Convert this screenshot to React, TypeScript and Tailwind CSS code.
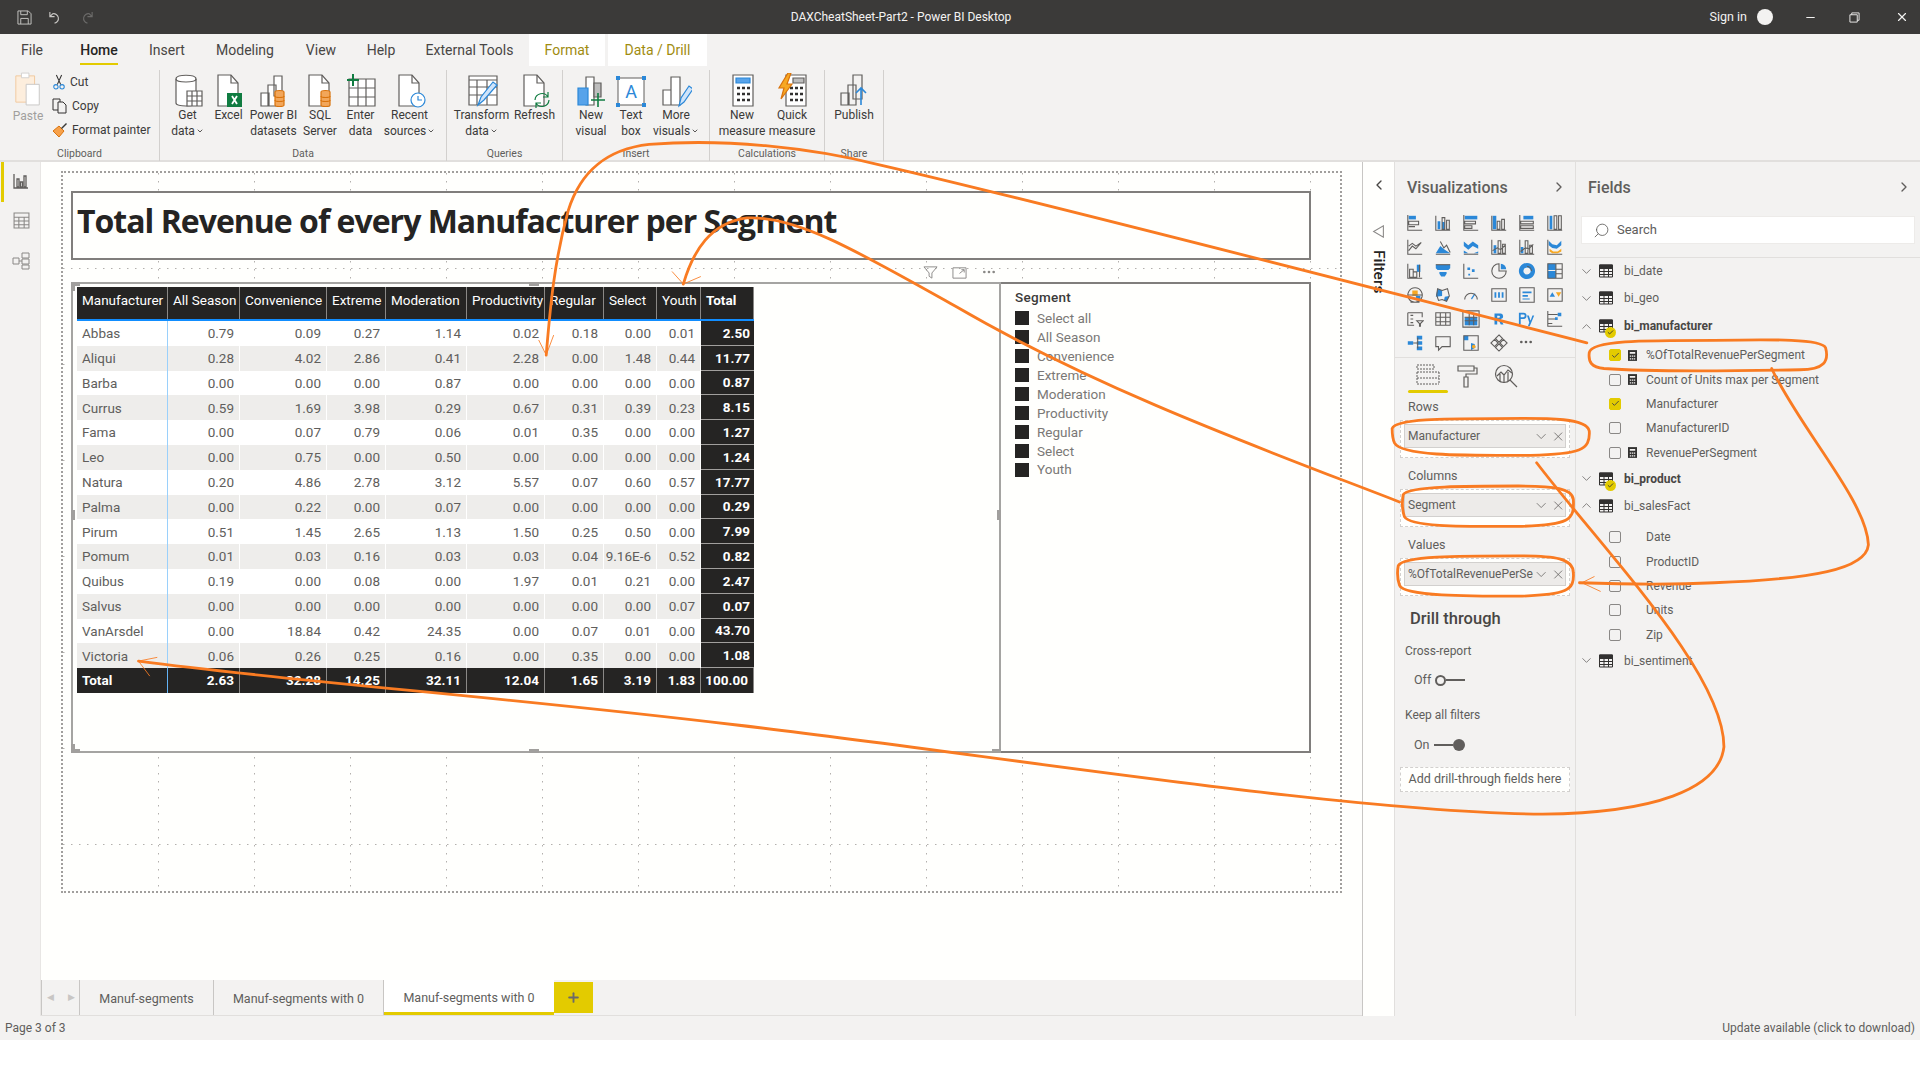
import type { ReactNode } from 'react';
import { Check, ChevronDown, ChevronLeft, ChevronRight, ChevronUp, Ellipsis, Minus, Plus, Search, X } from 'lucide-react';

const SEGMENT_COLUMNS = ['Manufacturer', 'All Season', 'Convenience', 'Extreme', 'Moderation', 'Productivity', 'Regular', 'Select', 'Youth', 'Total'];

const ROWS = [
  ['Abbas', '0.79', '0.09', '0.27', '1.14', '0.02', '0.18', '0.00', '0.01', '2.50'],
  ['Aliqui', '0.28', '4.02', '2.86', '0.41', '2.28', '0.00', '1.48', '0.44', '11.77'],
  ['Barba', '0.00', '0.00', '0.00', '0.87', '0.00', '0.00', '0.00', '0.00', '0.87'],
  ['Currus', '0.59', '1.69', '3.98', '0.29', '0.67', '0.31', '0.39', '0.23', '8.15'],
  ['Fama', '0.00', '0.07', '0.79', '0.06', '0.01', '0.35', '0.00', '0.00', '1.27'],
  ['Leo', '0.00', '0.75', '0.00', '0.50', '0.00', '0.00', '0.00', '0.00', '1.24'],
  ['Natura', '0.20', '4.86', '2.78', '3.12', '5.57', '0.07', '0.60', '0.57', '17.77'],
  ['Palma', '0.00', '0.22', '0.00', '0.07', '0.00', '0.00', '0.00', '0.00', '0.29'],
  ['Pirum', '0.51', '1.45', '2.65', '1.13', '1.50', '0.25', '0.50', '0.00', '7.99'],
  ['Pomum', '0.01', '0.03', '0.16', '0.03', '0.03', '0.04', '9.16E-6', '0.52', '0.82'],
  ['Quibus', '0.19', '0.00', '0.08', '0.00', '1.97', '0.01', '0.21', '0.00', '2.47'],
  ['Salvus', '0.00', '0.00', '0.00', '0.00', '0.00', '0.00', '0.00', '0.07', '0.07'],
  ['VanArsdel', '0.00', '18.84', '0.42', '24.35', '0.00', '0.07', '0.01', '0.00', '43.70'],
  ['Victoria', '0.06', '0.26', '0.25', '0.16', '0.00', '0.35', '0.00', '0.00', '1.08'],
];
const TOTALS = ['Total', '2.63', '32.28', '14.25', '32.11', '12.04', '1.65', '3.19', '1.83', '100.00'];
const SLICER_ITEMS = ['Select all', 'All Season', 'Convenience', 'Extreme', 'Moderation', 'Productivity', 'Regular', 'Select', 'Youth'];

const GRID = 'grid grid-cols-[91px_72px_87px_59px_81px_78px_59px_53px_44px_53px]';

// g = grey outline, b = blue fill, all on a 20x20 box
const VIZ_ICONS: { g: string; b?: string; y?: string }[] = [
  { g: 'M2 1v17h16M3 8h11v4H3zM3 14h7', b: 'M3 2h8v4H3z' },
  { g: 'M2 2v16h16M9 4h3v13H9zM14 7h3v10h-3z', b: 'M4 8h3v9H4zM9 9h3v8H9z' },
  { g: 'M2 1v17h16M3 8h12v3H3zM3 13h8v3H3z', b: 'M3 2h14v4H3z' },
  { g: 'M2 2v16h16M8 8h3v9H8zM13 6h3v11h-3z', b: 'M3 2h4v15H3z' },
  { g: 'M2 1v17h16M3 8h14v3H3zM3 13h14v3H3z', b: 'M6 2h11v4H6z' },
  { g: 'M2 2v16h16M9 2h3v15H9zM14 2h3v15h-3z', b: 'M4 2h3v15H4z' },
  { g: 'M2 2v16h16M3 14l4-5 4 3 6-7M3 9l4-3 4 3 6-4' },
  { g: 'M2 18h16M7 4l4 7 3-3 4 8', b: 'M2 17l5-8 5 4 6 4z' },
  { g: 'M2 18h16', b: 'M2 4l5 4 5-4 6 4v4l-6-3-5 4-5-4zM2 14l5 3h6l5-2v2H2z' },
  { g: 'M2 2v16h16M9 3h3v14H9zM14 7h3v10h-3zM3 14l5-3 4 2 5-5', b: 'M4 8h3v9H4z' },
  { g: 'M2 2v16h16M8 3h3v14H8zM13 8h3v9h-3zM3 15l5-4 4 1 5-5', b: 'M3 10h3v7H3z' },
  { g: 'M2 2v16h16', b: 'M3 3l4 4 5 1 5-5v5l-5 4-5-1-4-3z', y: 'M4 12l4 3 5 0 4-3v3l-4 2H7l-3-2z' },
  { g: 'M2 2v16h16M4 8h4v9H4zM8 11h4v6H8zM15 3v14', b: 'M12 3h4v8h-4z' },
  { b: 'M2 3h16v4l-2 2H4L2 7zM6 11h8v2l-2 3H8l-2-3z', g: 'M2 3h16' },
  { g: 'M2 2v16h16', b: 'M6 6h3v3H6zM11 8h3v3h-3zM7 13h2v2H7z' },
  { g: 'M10 2a8 8 0 1 0 8 8h-8z', b: 'M12 2a6 6 0 0 1 6 6h-6z' },
  { g: 'M10 5a5 5 0 0 1 5 5', b: 'M10 1a9 9 0 1 1-.1 0zM10 6a4 4 0 1 0 .1 0z' },
  { g: 'M2 2h16v16H2zM11 2v16M11 8h7M11 13h7', b: 'M2 2h9v7H2zM2 10h9v8H2z' },
  { g: 'M10 2a8 8 0 1 0 .1 0zM5 18h10M2 10h16', y: 'M7 5h6v6H7z', b: 'M11 11h5v5h-5z' },
  { g: 'M4 3l5 2 6-2 2 8-3 6-5-2-4 1-2-6z', b: 'M4 3l5 2v6l-7 1zM12 12l5-1-3 6-3-1z' },
  { g: 'M3 15a7 7 0 0 1 14 0', b: 'M10 14l4-6 1 1-4 6z' },
  { g: 'M2 3h16v14H2z', b: 'M5 7h2v6H5zM9 7h2v6H9zM13 7h2v6h-2z' },
  { g: 'M2 2h16v16H2z', b: 'M5 6h10v2H5zM5 10h6v2H5zM5 14h8v1H5z' },
  { g: 'M2 3h16v14H2z', b: 'M4 12l3-5 3 5z', y: 'M11 7h6l-3 5z' },
  { g: 'M2 3h16v5M2 3v14h7M12 12h7l-3 3v3h-1v-3zM5 6h3M5 10h3M5 14h3' },
  { g: 'M2 3h16v14H2zM2 8h16M2 13h16M7 3v14M13 3v14' },
  { g: 'M1 1h18v18H1zM3 8h14M3 12h14M8 4v13M13 4v13', b: 'M3 8h14v9H3z' },
  { b: 'M5 4h6a3 3 0 0 1 1 6l3 6h-3l-3-6H8v6H5zM8 6.500v2h2a1 1 0 0 0 0-2z', g: '' },
  { b: 'M1 3h5a3 3 0 0 1 0 7H3v6H1zM3 5v3h3a1.500 1.500 0 0 0 0-3zM10 6h2l2 6 2-6h2l-5 12h-2l1.500-4z', g: '' },
  { g: 'M2 1v17h16M2 5h11M2 10h8M2 15h5', b: 'M13 3h4v4h-4zM10 8h3v3h-3z' },
  { g: 'M8 10h5M13 4v12', b: 'M2 8h6v4H2zM12 2h6v4h-6zM12 8h6v4h-6zM12 14h6v4h-6z' },
  { g: 'M2 3h16v11H9l-4 4v-4H2z' },
  { g: 'M2 2h16v16H2z', b: 'M2 2h5v5H2zM10 10l4 1 1 4-5 3z', y: 'M13 12a2 2 0 1 0 .1 0z' },
  { g: 'M10 1l4 4-4 4-4-4zM15 6l4 4-4 4-4-4zM5 6l4 4-4 4-4-4zM10 11l4 4-4 4-4-4z' },
];

const Page = ({ children }: { children: ReactNode }) => (
  <svg viewBox="0 0 32 36" className="w-[32px] h-[36px]" fill="none" stroke="#605e5c" strokeWidth="1.2">{children}</svg>
);

const DocIcon = ({ children }: { children?: ReactNode }) => (
  <Page>
    <path d="M5 2h13l7 8v23H5z" fill="#fff" />
    <path d="M18 2v8h7" />
    {children}
  </Page>
);

const Cyl = () => (
  <>
    <path d="M17 19c0-2 9-2 9 0v13c0 2-9 2-9 0z" fill="#f2a65a" stroke="#d9730d" />
    <path d="M17 23c0 2 9 2 9 0M17 27c0 2 9 2 9 0" stroke="#d9730d" />
  </>
);

const RIBBON_ICONS: Record<string, ReactNode> = {
  getData: (
    <Page>
      <path d="M4 6c0-5 20-5 20 0v24c0 4-20 4-20 0z" fill="#fff" />
      <path d="M4 6c0 4 20 4 20 0" />
      <path d="M15 18h15v15H15zM15 23h15M15 28h15M20 18v15M25 18v15" fill="#fff" />
    </Page>
  ),
  excel: (
    <DocIcon>
      <path d="M14 20h15v14H14z" fill="#107c41" stroke="none" />
      <path d="M19 23l5 8M24 23l-5 8" stroke="#fff" strokeWidth="1.8" />
    </DocIcon>
  ),
  datasets: (
    <Page>
      <path d="M3 20h8v13H3zM10 12h8v21h-8zM16 3h8v20h-8z" fill="#fff" />
      <Cyl />
    </Page>
  ),
  sql: (
    <DocIcon>
      <Cyl />
    </DocIcon>
  ),
  enter: (
    <Page>
      <path d="M4 6h26v27H4zM4 15h26M4 24h26M13 6v27M21 6v27" fill="#fff" />
      <path d="M8 1v12M2 7h12" stroke="#107c41" strokeWidth="2" />
    </Page>
  ),
  recent: (
    <DocIcon>
      <circle cx="24" cy="27" r="7" fill="#fff" stroke="#2b88d8" />
      <path d="M24 23v4h4" stroke="#2b88d8" />
    </DocIcon>
  ),
  transform: (
    <Page>
      <path d="M3 3h28v29H3z" fill="#fff" />
      <path d="M3 7h28M3 14h28M3 22h28M11 7v25M21 7v25" />
      <path d="M12 32l3-8 12-15 4 3-13 15z" fill="#cfe4fa" stroke="#2b88d8" />
    </Page>
  ),
  refresh: (
    <DocIcon>
      <path d="M16 27a7 7 0 0 1 13-3M30 27a7 7 0 0 1-13 3M29 19v5h-5M17 35v-5h5" stroke="#107c41" />
    </DocIcon>
  ),
  newVisual: (
    <Page>
      <path d="M11 4h8v28h-8z" fill="#fff" />
      <path d="M19 10h7v14h-7z" fill="#bdbdbd" />
      <path d="M3 15h10v17H3z" fill="#57a3ea" stroke="#2b88d8" />
      <path d="M23 20v14M16 27h14" stroke="#107c41" strokeWidth="1.6" />
    </Page>
  ),
  textBox: (
    <svg viewBox="0 0 32 36" className="w-[32px] h-[36px]" fill="none">
      <path d="M3 5h26v27H3z" stroke="#605e5c" fill="#fff" />
      <path d="M1 3h4v4H1zM27 3h4v4h-4zM1 30h4v4H1zM27 30h4v4h-4z" fill="#2b88d8" />
      <text x="16" y="25" textAnchor="middle" fontSize="18" fill="#2b88d8" fontFamily="Roboto, sans-serif">A</text>
    </svg>
  ),
  moreVisuals: (
    <Page>
      <path d="M3 17h8v15H3zM11 4h9v28h-9z" fill="#fff" />
      <path d="M19 33l2-8 8-12 4 3-9 13z" fill="#cfe4fa" stroke="#2b88d8" />
    </Page>
  ),
  measure: (
    <Page>
      <path d="M7 2h20v31H7z" fill="#fff" />
      <path d="M10 5h14v5H10z" fill="#57a3ea" stroke="#2b88d8" />
      <path d="M11 15h3M16 15h3M21 15h3M11 21h3M16 21h3M21 21h3M11 27h3M16 27h3M21 27h3" stroke="#323130" strokeWidth="2.400" />
    </Page>
  ),
  quick: (
    <Page>
      <path d="M10 2h20v31H10z" fill="#fff" />
      <path d="M17 5h11v5H17z" fill="#bdbdbd" />
      <path d="M14 15h3M19 15h3M24 15h3M14 21h3M19 21h3M24 21h3M14 27h3M19 27h3M24 27h3" stroke="#323130" strokeWidth="2.400" />
      <path d="M12 0L3 15h5l-3 11 11-15h-5l4-11z" fill="#f7a823" stroke="#d9730d" />
    </Page>
  ),
  publish: (
    <Page>
      <path d="M3 20h8v12H3zM10 12h8v20h-8zM15 2h9v24h-9z" fill="#f3f2f1" />
      <path d="M23 32V15M18 20l5-5 5 5" stroke="#2b88d8" strokeWidth="1.6" />
    </Page>
  ),
};

const RibbonItem = ({ icon, lines, w, chevron }: { icon: string; lines: string[]; w: string; chevron?: boolean }) => (
  <div className={`${w} flex flex-col items-center text-[12px] leading-[16px] text-[#3b3a39]`}>
    <div className="h-[37px] flex items-end mt-[2px] -mb-[2px]">{RIBBON_ICONS[icon]}</div>
    <span className="whitespace-nowrap">{lines[0]}</span>
    {lines[1] && (
      <span className="whitespace-nowrap flex items-center gap-[1px]">
        {lines[1]}
        {chevron && <ChevronDown size={8} strokeWidth={2.500} />}
      </span>
    )}
  </div>
);

const RibbonGroup = ({ label, w, children }: { label: string; w: string; children: ReactNode }) => (
  <div className={`${w} h-[91px] flex flex-col border-r border-[#d2d0ce]`}>
    <div className="flex-1 flex justify-center">{children}</div>
    <div className="text-center text-[10.5px] leading-[14px] text-[#605e5c]">{label}</div>
  </div>
);

const Ribbon = () => (
  <div className="h-[96px] bg-[#f3f2f1] border-b-2 border-[#e1dfdd] flex items-start pt-[4px]">
    <RibbonGroup label="Clipboard" w="w-[160px]">
      <div className="w-[52px] flex flex-col items-center pl-[4px]">
        <svg viewBox="0 0 32 40" className="w-[30px] h-[38px]" fill="none">
          <path d="M3 6h20v28H3z" fill="#fdeedd" stroke="#f1c99d" />
          <path d="M9 3h8v5H9z" fill="#fff" stroke="#d2d0ce" />
          <path d="M14 15h14v22H14z" fill="#fff" stroke="#c8c6c4" />
        </svg>
        <span className="text-[12px] leading-[16px] text-[#a19f9d]">Paste</span>
      </div>
      <div className="flex-1 flex flex-col text-[12px] text-[#3b3a39] gap-[6px] pt-[3px]">
        <div className="flex items-center gap-[4px] h-[18px]">
          <svg viewBox="0 0 16 18" className="w-[14px] h-[16px]" fill="none" stroke="#323130" strokeWidth="1.200">
            <path d="M5 1l5 11M11 1L6 12" />
            <circle cx="4.500" cy="14.500" r="2.500" stroke="#2b88d8" />
            <circle cx="11.500" cy="14.500" r="2.500" stroke="#2b88d8" />
          </svg>
          <span>Cut</span>
        </div>
        <div className="flex items-center gap-[4px] h-[18px]">
          <svg viewBox="0 0 16 16" className="w-[16px] h-[16px]" fill="none" stroke="#323130">
            <path d="M1 1h7v11H1z" />
            <path d="M6 4h5l3 3v8H6z" fill="#f3f2f1" />
          </svg>
          <span>Copy</span>
        </div>
        <div className="flex items-center gap-[4px] h-[18px]">
          <svg viewBox="0 0 16 16" className="w-[16px] h-[16px]" fill="none">
            <path d="M1 9l6-5 5 5-5 6z" fill="#f7a14a" stroke="#d9730d" />
            <path d="M9 6l5-5 1 1-5 5z" fill="#3b3a39" />
          </svg>
          <span className="whitespace-nowrap">Format painter</span>
        </div>
      </div>
    </RibbonGroup>
    <RibbonGroup label="Data" w="w-[287px]">
      <RibbonItem icon="getData" lines={['Get', 'data']} w="w-[42px]" chevron />
      <RibbonItem icon="excel" lines={['Excel']} w="w-[40px]" />
      <RibbonItem icon="datasets" lines={['Power BI', 'datasets']} w="w-[50px]" />
      <RibbonItem icon="sql" lines={['SQL', 'Server']} w="w-[43px]" />
      <RibbonItem icon="enter" lines={['Enter', 'data']} w="w-[38px]" />
      <RibbonItem icon="recent" lines={['Recent', 'sources']} w="w-[60px]" chevron />
    </RibbonGroup>
    <RibbonGroup label="Queries" w="w-[116px]">
      <RibbonItem icon="transform" lines={['Transform', 'data']} w="w-[60px]" chevron />
      <RibbonItem icon="refresh" lines={['Refresh']} w="w-[46px]" />
    </RibbonGroup>
    <RibbonGroup label="Insert" w="w-[147px]">
      <RibbonItem icon="newVisual" lines={['New', 'visual']} w="w-[40px]" />
      <RibbonItem icon="textBox" lines={['Text', 'box']} w="w-[40px]" />
      <RibbonItem icon="moreVisuals" lines={['More', 'visuals']} w="w-[50px]" chevron />
    </RibbonGroup>
    <RibbonGroup label="Calculations" w="w-[115px]">
      <RibbonItem icon="measure" lines={['New', 'measure']} w="w-[50px]" />
      <RibbonItem icon="quick" lines={['Quick', 'measure']} w="w-[50px]" />
    </RibbonGroup>
    <RibbonGroup label="Share" w="w-[59px]">
      <RibbonItem icon="publish" lines={['Publish']} w="w-[50px]" />
    </RibbonGroup>
  </div>
);

const TitleBar = () => (
  <div className="h-[34px] bg-[#3b3a39] flex items-center text-[#f3f2f1] text-[12px]">
    <div className="w-[667px] flex items-center gap-[16px] pl-[17px]">
      <svg viewBox="0 0 16 16" className="w-[15px] h-[15px]" fill="none" stroke="#c8c6c4">
        <path d="M1 1h11l3 3v11H1zM4 1v4h7V1M4 15v-6h8v6" />
      </svg>
      <svg viewBox="0 0 16 16" className="w-[15px] h-[15px]" fill="none" stroke="#c8c6c4" strokeWidth="1.200">
        <path d="M2 2v5h5M2 7l3-3a5 5 0 1 1 2 10" />
      </svg>
      <svg viewBox="0 0 16 16" className="w-[15px] h-[15px]" fill="none" stroke="#6b6a69" strokeWidth="1.200">
        <path d="M14 2v5H9M14 7l-3-3a5 5 0 1 0-2 10" />
      </svg>
    </div>
    <div className="w-[450px] text-center pl-[18px]">DAXCheatSheet-Part2 - Power BI Desktop</div>
    <div className="flex-1 flex items-center justify-end">
      <span className="text-[12.5px]">Sign in</span>
      <span className="w-[16px] h-[16px] rounded-full bg-[#f3f2f1] ml-[10px] mr-[31px]" />
      <Minus size={13} className="mr-[32px]" />
      <svg viewBox="0 0 12 12" className="w-[11px] h-[11px] mr-[35px]" fill="none" stroke="#f3f2f1">
        <path d="M1 3h8v8H1zM3 3V1h8v8H9" />
      </svg>
      <X size={14} className="mr-[11px]" />
    </div>
  </div>
);

const RibbonTab = ({ w, label, active, special }: { w: string; label: string; active?: boolean; special?: boolean }) => (
  <div
    className={`${w} h-full relative flex items-center justify-center text-[14px] ${
      special ? 'bg-white text-[#a08c10]' : active ? 'text-[#252423] font-medium' : 'text-[#484644]'
    }`}
  >
    {label}
    {active && <span className="absolute bottom-[1px] left-[16px] right-[16px] h-[2px] bg-[#e3cb00]" />}
  </div>
);

const RibbonTabs = () => (
  <div className="h-[32px] bg-[#f3f2f1] flex">
    <RibbonTab w="w-[64px]" label="File" />
    <RibbonTab w="w-[70px]" label="Home" active />
    <RibbonTab w="w-[66px]" label="Insert" />
    <RibbonTab w="w-[90px]" label="Modeling" />
    <RibbonTab w="w-[62px]" label="View" />
    <RibbonTab w="w-[58px]" label="Help" />
    <RibbonTab w="w-[119px]" label="External Tools" />
    <RibbonTab w="w-[76px]" label="Format" special />
    <div className="w-[3px]" />
    <RibbonTab w="w-[99px]" label="Data / Drill" special />
  </div>
);

const LeftNav = () => (
  <div className="w-[41px] bg-[#f3f2f1] border-r border-[#e8e6e4] flex flex-col items-center pt-[11px] pl-[2px] gap-[23px] relative">
    <span className="absolute left-[1px] top-0 w-[3px] h-[40px] bg-[#e3cb00]" />
    <svg viewBox="0 0 16 16" className="w-[16px] h-[16px]" fill="none" stroke="#605e5c" strokeWidth="1.300">
      <path d="M1 1v14h14M4 6h2v8H4zM7.500 9h2v5h-2zM11 3h2v11h-2z" />
    </svg>
    <svg viewBox="0 0 16 16" className="w-[17px] h-[17px]" fill="none" stroke="#8a8886">
      <path d="M1 1h14v14H1zM1 5h14M1 8.500h14M1 12h14M5.500 5v10M10.500 5v10" />
    </svg>
    <svg viewBox="0 0 18 18" className="w-[18px] h-[18px]" fill="none" stroke="#8a8886">
      <path d="M1 6h6v6H1zM10 1h7v5h-7zM10 7h7v5h-7zM10 13h7v4h-7zM7 9h3" />
    </svg>
  </div>
);

const Handle = ({ className }: { className: string }) => (
  <span className={`absolute bg-[#a19f9d] ${className}`} />
);

const TableVisual = () => (
  <div className="w-[930px] h-full relative border-2 border-[#a5a4a2] pl-[4px] pt-[3px]">
    <div className="w-[677px] text-[13.5px]">
      <div className={`${GRID} h-[34px] bg-[#252423] text-white border-b-2 border-[#118dff]`}>
        {SEGMENT_COLUMNS.map((c, i) => (
          <div
            key={c}
            className={`flex items-center pl-[5px] pb-[5px] whitespace-nowrap border-r border-[#8a8886] ${i === 9 ? 'font-bold' : ''}`}
          >
            {c}
          </div>
        ))}
      </div>
      {ROWS.map((row, r) => (
        <div key={row[0]} className={`${GRID} h-[24.8px] text-[#605e5c] ${r % 2 ? 'bg-[#eeedeb]' : 'bg-white'}`}>
          {row.map((v, i) =>
            i === 0 ? (
              <div key={i} className="flex items-center pl-[5px] border-r border-[#9ad0fb]">{v}</div>
            ) : i === 9 ? (
              <div key={i} className="flex items-center justify-end pr-[4px] bg-[#252423] text-white font-bold border-b border-[#a19f9d]">{v}</div>
            ) : (
              <div key={i} className="flex items-center justify-end pr-[5px] border-r border-white">{v}</div>
            )
          )}
        </div>
      ))}
      <div className={`${GRID} h-[24.8px] bg-[#252423] text-white font-bold`}>
        {TOTALS.map((v, i) => (
          <div
            key={i}
            className={`flex items-center ${i === 0 ? 'pl-[5px] border-r border-[#63b3f5]' : 'justify-end pr-[5px] border-r border-[#8a8886]'}`}
          >
            {v}
          </div>
        ))}
      </div>
    </div>
    <Handle className="-left-[2px] -top-[2px] w-[9px] h-[4px]" />
    <Handle className="-left-[2px] -top-[2px] w-[4px] h-[9px]" />
    <Handle className="left-[456px] -top-[2px] w-[10px] h-[4px]" />
    <Handle className="-left-[2px] top-[226px] w-[4px] h-[10px]" />
    <Handle className="left-[456px] -bottom-[2px] w-[10px] h-[4px]" />
    <Handle className="-left-[2px] -bottom-[2px] w-[9px] h-[4px]" />
    <Handle className="-left-[2px] -bottom-[2px] w-[4px] h-[9px]" />
    <Handle className="-right-[2px] top-[226px] w-[4px] h-[10px]" />
    <Handle className="-right-[2px] -bottom-[2px] w-[9px] h-[4px]" />
    <div className="absolute right-[2px] -top-[20px] flex items-center gap-[14px] text-[#8a8886]">
      <svg viewBox="0 0 16 16" className="w-[15px] h-[15px]" fill="none" stroke="#8a8886">
        <path d="M1 2h14l-5.500 6.500V14l-3-2V8.500z" />
      </svg>
      <svg viewBox="0 0 16 16" className="w-[15px] h-[15px]" fill="none" stroke="#8a8886">
        <path d="M1 3h14v11H1zM8 9l5-4M10 5h3v3" />
      </svg>
      <Ellipsis size={16} />
    </div>
  </div>
);

const Slicer = () => (
  <div className="w-[310px] h-full border-2 border-l-0 border-[#807e7c] pt-[2px] pl-[14px] text-[13.5px]">
    <div className="text-[#3b3a39] font-medium h-[22px] flex items-center tracking-[0.3px]">Segment</div>
    <div className="mt-[1px]">
      {SLICER_ITEMS.map((s) => (
        <div key={s} className="h-[18.9px] flex items-center gap-[8px] text-[#7a7876]">
          <span className="w-[14px] h-[14px] bg-[#252423]" />
          {s}
        </div>
      ))}
    </div>
  </div>
);

const Canvas = () => (
  <div className="flex-1 bg-[#fffffd] pl-[20px] pt-[9px]">
    <div className="w-[1281px] h-[722px] relative border-2 border-dotted border-[#a19f9d] pl-[8px] pt-[18px]">
      <svg className="absolute left-0 top-0 w-full h-full" aria-hidden="true">
        <defs>
          <pattern id="canvas-grid" width="96" height="96" patternUnits="userSpaceOnUse">
            {Array.from({ length: 12 }).map((_, i) => (
              <g key={i} fill="#b3b0ad">
                <rect x="95" y={i * 8} width="2" height="1.500" />
                <rect x={i * 8} y="95" width="1.500" height="2" />
              </g>
            ))}
          </pattern>
        </defs>
        <rect width="100%" height="100%" fill="url(#canvas-grid)" />
      </svg>
      <div className="relative w-[1240px] h-[69px] bg-[#fffffd] border-2 border-[#807e7c] flex items-center pl-[4px] pb-[9px]">
        <h1 className="text-[32px] font-bold text-[#252423] whitespace-nowrap font-['Open_Sans',sans-serif] tracking-[-1px]">
          Total Revenue of every Manufacturer per Segment
        </h1>
      </div>
      <div className="relative flex h-[471px] mt-[22px] bg-[#fffffd]">
        <TableVisual />
        <Slicer />
      </div>
    </div>
  </div>
);

const SheetTab = ({ w, label, active }: { w: string; label: string; active?: boolean }) => (
  <div
    className={`${w} flex items-center justify-center text-[12.5px] ${
      active ? 'bg-white border-b-[3px] border-[#e3cb00] pt-[5px] text-[#605e5c]' : 'border-r border-[#c8c6c4] pt-[3px] text-[#605e5c]'
    }`}
  >
    {label}
  </div>
);

const SheetTabs = () => (
  <div className="h-[36px] bg-[#f3f2f1] flex border-b border-[#e1dfdd]">
    <div className="w-[39px] flex items-center justify-center gap-[14px] border-x border-[#c8c6c4] text-[#c8c6c4] text-[9px]">
      <span>◀</span>
      <span>▶</span>
    </div>
    <SheetTab w="w-[134px]" label="Manuf-segments" />
    <SheetTab w="w-[170px]" label="Manuf-segments with 0" />
    <SheetTab w="w-[170px]" label="Manuf-segments with 0" active />
    <div className="w-[39px] my-[2px] bg-[#e3cb00] flex items-center justify-center text-[#6b6a69]">
      <Plus size={15} strokeWidth={3} />
    </div>
  </div>
);

const FiltersPane = () => (
  <div className="w-[32px] bg-[#fffffd] border-l border-[#c8c6c4] flex flex-col items-center pt-[15px]">
    <ChevronLeft size={16} className="text-[#484644]" />
    <svg viewBox="0 0 16 16" className="w-[13px] h-[13px] mt-[32px]" fill="none" stroke="#8a8886" strokeWidth="1.300">
      <path d="M14 1v14L2 8z" />
    </svg>
    <span className="[writing-mode:vertical-rl] text-[15.5px] font-medium text-[#252423] mt-[12px]">Filters</span>
  </div>
);

const Chip = ({ label }: { label: string }) => (
  <div className="h-[24px] bg-[#edebe9] border border-[#d2d0ce] flex items-center pl-[3px] text-[#605e5c] text-[12px]">
    <span className="w-[130px] overflow-hidden whitespace-nowrap">{label}</span>
    <ChevronDown size={17} className="text-[#605e5c]" strokeWidth={1.100} />
    <X size={15} className="ml-[1px] text-[#605e5c]" strokeWidth={1.300} />
  </div>
);

const Well = ({ label, chip }: { label: string; chip: string }) => (
  <div className="h-[69px] pt-[5px]">
    <div className="h-[17px] pl-[13px] text-[12.5px] leading-[17px] text-[#605e5c]">{label}</div>
    <div className="mt-[5px] mx-[5px] h-[38px] bg-[#fffffd] border border-dashed border-[#d2d0ce] p-[3px]">
      <Chip label={chip} />
    </div>
  </div>
);

const VizPane = () => (
  <div className="w-[181px] bg-[#f3f2f1] border-l border-[#e1dfdd]">
    <div className="h-[52px] flex items-center justify-between pl-[12px] pr-[8px]">
      <span className="text-[16px] font-medium text-[#605e5c]">Visualizations</span>
      <ChevronRight size={16} className="text-[#605e5c] -mt-[3px]" />
    </div>
    <div className="grid grid-cols-[repeat(6,28px)] auto-rows-[24px] pl-[11px] h-[143px]">
      {VIZ_ICONS.map((ic, i) => (
        <svg key={i} viewBox="0 0 20 20" className="w-[18px] h-[18px]" fill="none">
          {ic.b && <path d={ic.b} fill="#2b88d8" />}
          {ic.y && <path d={ic.y} fill="#f7a823" />}
          <path d={ic.g} stroke="#605e5c" strokeWidth="1.200" />
        </svg>
      ))}
      <Ellipsis size={16} className="text-[#605e5c]" />
    </div>
    <div className="h-[36px] border-t border-[#e1dfdd] flex items-start pl-[12px] pt-[6px] relative">
      <svg viewBox="0 0 24 22" className="w-[24px] h-[22px] ml-[9px]" fill="none" stroke="#605e5c" strokeDasharray="2 1">
        <path d="M1 1h17v4H1zM1 8h22M1 14h22M1 20h22M1 8v12M23 8v12" />
      </svg>
      <svg viewBox="0 0 22 24" className="w-[22px] h-[24px] ml-[16px]" fill="none" stroke="#605e5c" strokeWidth="1.200">
        <path d="M2 2h16v5H2zM18 4h3v6H10v3M8 13h4v10H8z" />
      </svg>
      <svg viewBox="0 0 24 24" className="w-[24px] h-[24px] ml-[16px]" fill="none" stroke="#605e5c" strokeWidth="1.200">
        <circle cx="10" cy="10" r="8.500" />
        <path d="M3 12l4-4 3 3 4-5 4 3M16 16l7 7M6 10v8M10 11v8M14 8v9" />
      </svg>
      <span className="absolute left-[13px] top-[32px] w-[40px] h-[3px] rounded-full bg-[#e3cb00]" />
    </div>
    <Well label="Rows" chip="Manufacturer" />
    <Well label="Columns" chip="Segment" />
    <Well label="Values" chip="%OfTotalRevenuePerSegment" />
    <div className="pl-[15px] h-[38px] flex items-center text-[16.5px] font-medium text-[#484644]">Drill through</div>
    <div className="pl-[10px] text-[12px] text-[#605e5c] mt-[4px] h-[18px] leading-[18px]">Cross-report</div>
    <div className="h-[30px] flex items-center pl-[19px] text-[12.5px] text-[#605e5c] mt-[5px]">
      Off
      <span className="ml-[4px] w-[11px] h-[11px] rounded-full border-2 border-[#605e5c]" />
      <span className="w-[19px] h-[1.500px] bg-[#605e5c]" />
    </div>
    <div className="pl-[10px] text-[12px] text-[#605e5c] mt-[11px] h-[18px] leading-[18px]">Keep all filters</div>
    <div className="h-[30px] flex items-center pl-[19px] text-[12.5px] text-[#605e5c] mt-[6px]">
      On
      <span className="ml-[4px] w-[19px] h-[1.500px] bg-[#605e5c]" />
      <span className="w-[12px] h-[12px] rounded-full bg-[#605e5c]" />
    </div>
    <div className="mx-[5px] mt-[7px] h-[25px] bg-[#fffffd] border border-dashed border-[#d2d0ce] flex items-center justify-center text-[12.5px] text-[#605e5c]">
      Add drill-through fields here
    </div>
  </div>
);

const TableIcon = ({ used }: { used?: boolean }) => (
  <span className="relative w-[14px] h-[14px] ml-[5px] mr-[11px]">
    <svg viewBox="0 0 14 14" className="w-[14px] h-[14px]" fill="none" stroke="#323130">
      <path d="M.500 1h13v12H.500zM.500 4.500h13M.500 7.500h13M.500 10.500h13M5 1v12M9.500 1v12" />
      <path d="M.500 1h13v2.500H.500z" fill="#323130" />
    </svg>
    {used && (
      <span className="absolute -right-[3px] -bottom-[5px] w-[11px] h-[11px] rounded-full bg-[#e3cb00] flex items-center justify-center">
        <Check size={7} strokeWidth={3} className="text-[#323130]" />
      </span>
    )}
  </span>
);

const TableRow = ({ name, h, open, bold, used }: { name: string; h: string; open?: boolean; bold?: boolean; used?: boolean }) => (
  <div className={`${h} flex items-center pl-[3px] text-[12px] text-[#605e5c]`}>
    {open ? <ChevronUp size={15} strokeWidth={1.200} className="text-[#605e5c]" /> : <ChevronDown size={15} strokeWidth={1.200} className="text-[#605e5c]" />}
    <TableIcon used={used} />
    <span className={bold ? 'font-bold text-[#484644]' : ''}>{name}</span>
  </div>
);

const FieldRow = ({ name, checked, calc }: { name: string; checked?: boolean; calc?: boolean }) => (
  <div className="h-[24.4px] flex items-center pl-[33px] text-[12px] text-[#605e5c]">
    <span className={`w-[12px] h-[12px] rounded-[2px] border flex items-center justify-center ${checked ? 'bg-[#e3cb00] border-[#e3cb00]' : 'border-[#8a8886]'}`}>
      {checked && <Check size={9} strokeWidth={2.500} className="text-[#484644]" />}
    </span>
    <span className="w-[25px] flex justify-center pr-[3px]">
      {calc && (
        <svg viewBox="0 0 10 12" className="w-[9px] h-[11px]">
          <path d="M0 0h10v12H0z" fill="#323130" />
          <path d="M2 2h6v2H2zM2 6h1.500v1.500H2zM4.300 6h1.500v1.500H4.300zM6.500 6H8v1.500H6.500zM2 9h1.500v1.500H2zM4.300 9h1.500v1.500H4.300zM6.500 9H8v1.500H6.500z" fill="#f3f2f1" />
        </svg>
      )}
    </span>
    <span className="whitespace-nowrap">{name}</span>
  </div>
);

const FieldsPane = () => (
  <div className="flex-1 bg-[#f3f2f1] border-l border-[#e1dfdd]">
    <div className="h-[52px] flex items-center justify-between pl-[12px] pr-[8px]">
      <span className="text-[16px] font-medium text-[#605e5c]">Fields</span>
      <ChevronRight size={16} className="text-[#605e5c] -mt-[3px]" />
    </div>
    <div className="mx-[5px] h-[28px] mt-[2px] bg-white border border-[#edebe9] flex items-center pl-[11px] gap-[7px] text-[13px] text-[#605e5c]">
      <Search size={17} strokeWidth={1.200} className="-scale-x-100" />
      Search
    </div>
    <div className="border-t border-[#e1dfdd] mt-[13px]">
      <TableRow name="bi_date" h="h-[26px]" />
      <TableRow name="bi_geo" h="h-[28px]" />
      <TableRow name="bi_manufacturer" h="h-[28px]" open bold used />
      <div className="h-[3px]" />
      <FieldRow name="%OfTotalRevenuePerSegment" checked calc />
      <FieldRow name="Count of Units max per Segment" calc />
      <FieldRow name="Manufacturer" checked />
      <FieldRow name="ManufacturerID" />
      <FieldRow name="RevenuePerSegment" calc />
      <TableRow name="bi_product" h="h-[28px]" bold used />
      <TableRow name="bi_salesFact" h="h-[26px]" open />
      <div className="h-[6px]" />
      <FieldRow name="Date" />
      <FieldRow name="ProductID" />
      <FieldRow name="Revenue" />
      <FieldRow name="Units" />
      <FieldRow name="Zip" />
      <TableRow name="bi_sentiment" h="h-[28px]" />
    </div>
  </div>
);

// the hand-drawn orange notes lie over everything, traced in the 1568-wide space
const Annotations = () => (
  <svg viewBox="0 0 1568 874" className="absolute left-0 top-0 w-[1920px] h-[1070px] pointer-events-none" fill="none" stroke="#f97b22" strokeWidth="2.300" strokeLinecap="round">
    <path d="M446 290C449 255 452 215 464 172C474 140 495 122 530 118C590 113 660 120 720 135C850 165 1100 230 1296 280" />
    <path d="M558 232C566 205 580 182 610 178C650 176 700 205 780 250C900 320 1040 370 1143 410" />
    <path d="M1447 301C1470 350 1525 410 1526 445C1524 465 1480 473 1400 476C1360 478 1320 477 1290 476" />
    <path d="M1255 378C1310 450 1408 550 1408 610C1404 645 1350 664 1260 665C1100 664 800 615 600 592C400 568 250 558 113 540" />
    <path d="M1298 288C1300 278 1340 278 1400 278C1450 277 1488 277 1491 284C1494 295 1490 302 1470 302C1420 303 1350 304 1310 301C1300 300 1297 296 1298 288Z" />
    <path d="M1137 350C1140 342 1180 342 1220 342C1270 341 1296 342 1298 352C1299 368 1290 371 1250 372C1200 372 1145 373 1139 362C1137 358 1137 354 1137 350Z" />
    <path d="M1146 404C1150 397 1200 397 1240 397C1270 397 1284 399 1285 408C1286 425 1282 429 1240 430C1200 430 1152 431 1147 422C1145 416 1145 410 1146 404Z" />
    <path d="M1142 462C1146 454 1190 454 1240 454C1270 454 1285 456 1285 468C1286 482 1280 486 1240 487C1200 487 1146 487 1143 478C1141 472 1141 467 1142 462Z" />
    <g strokeWidth="0.700">
      <path d="M446 290L440 278M446 290L452 274" />
      <path d="M558 232L549 222M558 232L572 226" />
      <path d="M1292 476L1302 471M1292 476L1307 483" />
      <path d="M113 540L128 537M113 540L122 552" />
    </g>
  </svg>
);

export default function App() {
  return (
    <div className="w-[1920px] h-[1070px] relative overflow-hidden bg-white font-['Roboto',sans-serif]">
      <div className="h-[1040px] flex flex-col">
        <TitleBar />
        <RibbonTabs />
        <Ribbon />
        <div className="flex-1 flex min-h-0">
          <LeftNav />
          <div className="w-[1321px] flex flex-col">
            <Canvas />
            <SheetTabs />
          </div>
          <FiltersPane />
          <VizPane />
          <FieldsPane />
        </div>
        <div className="h-[24px] bg-[#f3f2f1] flex items-center justify-between px-[5px] text-[12px] text-[#605e5c]">
          <span>Page 3 of 3</span>
          <span>Update available (click to download)</span>
        </div>
      </div>
      <Annotations />
    </div>
  );
}
